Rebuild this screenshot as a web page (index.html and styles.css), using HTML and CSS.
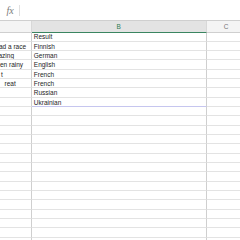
FILE: index.html
```html
<!DOCTYPE html>
<html>
<head>
<meta charset="utf-8">
<link rel="stylesheet" href="styles.css">
</head>
<body>
<div class="app">
  <div class="formula-bar">
    <span class="fx">fx</span>
    <span class="sep"></span>
  </div>
  <div class="sheet">
    <div class="hd"></div><div class="hd sel">B</div><div class="hd">C</div>

    <div class="c a"></div><div class="c b">Result</div><div class="c"></div>
    <div class="c a"><span class="frag s-race">ad a race</span></div><div class="c b">Finnish</div><div class="c"></div>
    <div class="c a"><span class="frag s-azing">azing</span></div><div class="c b">German</div><div class="c"></div>
    <div class="c a"><span class="frag s-rainy">en rainy</span></div><div class="c b">English</div><div class="c"></div>
    <div class="c a"><span class="frag s-t">t</span></div><div class="c b">French</div><div class="c"></div>
    <div class="c a"><span class="frag s-reat">reat</span></div><div class="c b">French</div><div class="c"></div>
    <div class="c a"></div><div class="c b">Russian</div><div class="c"></div>
    <div class="c a"></div><div class="c b last">Ukrainian</div><div class="c"></div>

    <div class="c a"></div><div class="c b"></div><div class="c"></div>
    <div class="c a"></div><div class="c b"></div><div class="c"></div>
    <div class="c a"></div><div class="c b"></div><div class="c"></div>
    <div class="c a"></div><div class="c b"></div><div class="c"></div>
    <div class="c a"></div><div class="c b"></div><div class="c"></div>
    <div class="c a"></div><div class="c b"></div><div class="c"></div>
    <div class="c a"></div><div class="c b"></div><div class="c"></div>
    <div class="c a"></div><div class="c b"></div><div class="c"></div>
    <div class="c a"></div><div class="c b"></div><div class="c"></div>
    <div class="c a"></div><div class="c b"></div><div class="c"></div>
    <div class="c a"></div><div class="c b"></div><div class="c"></div>
    <div class="c a"></div><div class="c b"></div><div class="c"></div>
    <div class="c a"></div><div class="c b"></div><div class="c"></div>
    <div class="c a"></div><div class="c b"></div><div class="c"></div>
    <div class="c a"></div><div class="c b"></div><div class="c"></div>
  </div>
</div>
</body>
</html>
```

FILE: styles.css
```css
* { box-sizing: border-box; }
html, body { margin: 0; padding: 0; background: #fff; }
.app {
  width: 240px;
  height: 240px;
  overflow: hidden;
  font-family: "Liberation Sans", Arial, sans-serif;
  color: #1c1c1c;
}
.formula-bar {
  height: 21px;
  display: flex;
  align-items: center;
  border-bottom: 1px solid #cfcfcf;
  background: #fff;
}
.fx {
  width: 19px;
  text-align: center;
  font-family: "Liberation Serif", serif;
  font-style: italic;
  font-size: 10px;
  color: #7a7a7a;
  padding-left: 1px;
}
.sep {
  width: 1px;
  height: 11px;
  background: #e0e0e0;
}
.sheet {
  display: grid;
  grid-template-columns: 32px 174.5px 40px;
  grid-template-rows: 11.5px;
  grid-auto-rows: 9.333px;
}
.hd {
  background: #f4f4f4;
  border-right: 1px solid #d8d8d8;
  border-bottom: 1px solid #cfcfcf;
  font-size: 6.5px;
  color: #777;
  display: flex;
  align-items: center;
  justify-content: center;
  padding-top: 1px;
}
.hd.sel {
  background: #e3e3e3;
  color: #2f7d54;
  border-bottom: 1.5px solid #3a8560;
}
.c {
  border-right: 1px solid #cfcfcf;
  border-bottom: 1px solid #e3e3e3;
  font-size: 6.5px;
  line-height: 7px;
  white-space: nowrap;
  overflow: hidden;
  display: flex;
  align-items: flex-end;
  padding-bottom: 0.5px;
}
.c.b { padding-left: 1.8px; }
.c.b.last { border-bottom-color: #c6c6ef; }
.frag { flex: none; }
.s-race { margin-left: -1px; }
.s-azing { margin-left: -1.5px; }
.s-rainy { margin-left: 0; }
.s-t { margin-left: 1px; }
.s-reat { margin-left: 4.5px; }
```
